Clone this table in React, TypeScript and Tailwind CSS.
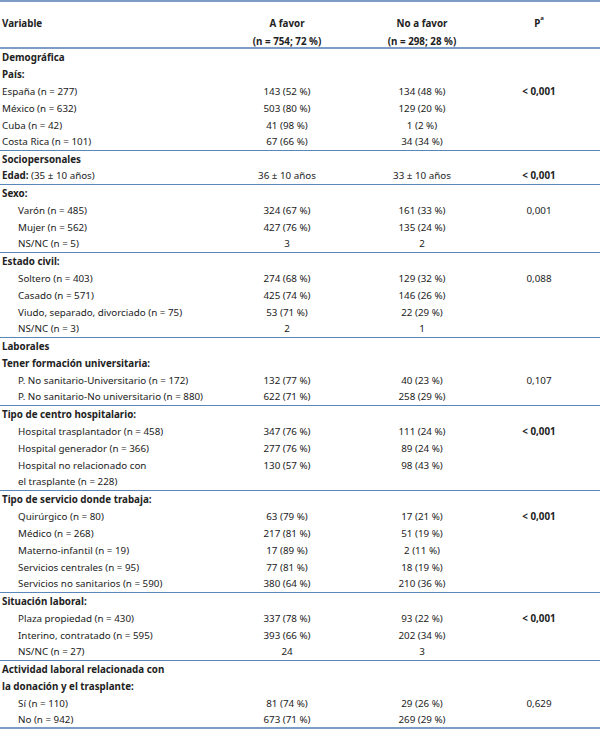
type Row = {
  label: string;
  head?: string;
  bold?: boolean;
  indent?: boolean;
  a?: string;
  b?: string;
  p?: string;
  pBold?: boolean;
  line?: "thin" | "thick";
};

const rows: Row[] = [
  { label: "Demográfica", bold: true },
  { label: "País:", bold: true },
  { label: "España (n = 277)", a: "143 (52 %)", b: "134 (48 %)", p: "< 0,001", pBold: true },
  { label: "México (n = 632)", a: "503 (80 %)", b: "129 (20 %)" },
  { label: "Cuba (n = 42)", a: "41 (98 %)", b: "1 (2 %)" },
  { label: "Costa Rica (n = 101)", a: "67 (66 %)", b: "34 (34 %)", line: "thin" },
  { label: "Sociopersonales", bold: true },
  { head: "Edad:", label: " (35 ± 10 años)", a: "36 ± 10 años", b: "33 ± 10 años", p: "< 0,001", pBold: true, line: "thin" },
  { label: "Sexo:", bold: true },
  { label: "Varón (n = 485)", indent: true, a: "324 (67 %)", b: "161 (33 %)", p: "0,001" },
  { label: "Mujer (n = 562)", indent: true, a: "427 (76 %)", b: "135 (24 %)" },
  { label: "NS/NC (n = 5)", indent: true, a: "3", b: "2", line: "thin" },
  { label: "Estado civil:", bold: true },
  { label: "Soltero (n = 403)", indent: true, a: "274 (68 %)", b: "129 (32 %)", p: "0,088" },
  { label: "Casado (n = 571)", indent: true, a: "425 (74 %)", b: "146 (26 %)" },
  { label: "Viudo, separado, divorciado (n = 75)", indent: true, a: "53 (71 %)", b: "22 (29 %)" },
  { label: "NS/NC (n = 3)", indent: true, a: "2", b: "1", line: "thin" },
  { label: "Laborales", bold: true },
  { label: "Tener formación universitaria:", bold: true },
  { label: "P. No sanitario-Universitario (n = 172)", indent: true, a: "132 (77 %)", b: "40 (23 %)", p: "0,107" },
  { label: "P. No sanitario-No universitario (n = 880)", indent: true, a: "622 (71 %)", b: "258 (29 %)", line: "thin" },
  { label: "Tipo de centro hospitalario:", bold: true },
  { label: "Hospital trasplantador (n = 458)", indent: true, a: "347 (76 %)", b: "111 (24 %)", p: "< 0,001", pBold: true },
  { label: "Hospital generador (n = 366)", indent: true, a: "277 (76 %)", b: "89 (24 %)" },
  { label: "Hospital no relacionado con", indent: true, a: "130 (57 %)", b: "98 (43 %)" },
  { label: "el trasplante (n = 228)", indent: true, line: "thin" },
  { label: "Tipo de servicio donde trabaja:", bold: true },
  { label: "Quirúrgico (n = 80)", indent: true, a: "63 (79 %)", b: "17 (21 %)", p: "< 0,001", pBold: true },
  { label: "Médico (n = 268)", indent: true, a: "217 (81 %)", b: "51 (19 %)" },
  { label: "Materno-infantil (n = 19)", indent: true, a: "17 (89 %)", b: "2 (11 %)" },
  { label: "Servicios centrales (n = 95)", indent: true, a: "77 (81 %)", b: "18 (19 %)" },
  { label: "Servicios no sanitarios (n = 590)", indent: true, a: "380 (64 %)", b: "210 (36 %)", line: "thin" },
  { label: "Situación laboral:", bold: true },
  { label: "Plaza propiedad (n = 430)", indent: true, a: "337 (78 %)", b: "93 (22 %)", p: "< 0,001", pBold: true },
  { label: "Interino, contratado (n = 595)", indent: true, a: "393 (66 %)", b: "202 (34 %)" },
  { label: "NS/NC (n = 27)", indent: true, a: "24", b: "3", line: "thin" },
  { label: "Actividad laboral relacionada con", bold: true },
  { label: "la donación y el trasplante:", bold: true },
  { label: "Sí (n = 110)", indent: true, a: "81 (74 %)", b: "29 (26 %)", p: "0,629" },
  { label: "No (n = 942)", indent: true, a: "673 (71 %)", b: "269 (29 %)", line: "thick" },
];

const cols = "grid grid-cols-[208px_158px_112px_122px]";

export default function App() {
  return (
    <div className="w-[600px] h-[729px] bg-white text-[#222] text-[9.8px] font-['Noto_Sans','Liberation_Sans',sans-serif]">
      <div className={`${cols} h-[49px] border-t-2 border-b-2 border-[#7d9dc6] pt-[13px] leading-[18px] font-bold`}>
        <div className="pl-[2px]">Variable</div>
        <div className="flex flex-col items-center">
          <span>A favor</span>
          <span>(n = 754; 72 %)</span>
        </div>
        <div className="flex flex-col items-center">
          <span>No a favor</span>
          <span>(n = 298; 28 %)</span>
        </div>
        <div className="flex justify-center">
          <span>
            P<sup className="text-[6px] align-[4px]">a</sup>
          </span>
        </div>
      </div>
      {rows.map((r, i) => (
        <div
          key={i}
          className={`${cols} h-[17px] items-center leading-none ${
            r.line === "thin" ? "border-b border-[#5b86b9]" : ""
          } ${r.line === "thick" ? "border-b-2 border-[#7d9dc6]" : ""}`}
        >
          <div className={`${r.indent ? "pl-[18px]" : "pl-[2px]"} whitespace-nowrap ${r.bold ? "font-bold" : ""}`}>
            {r.head && <span className="font-bold">{r.head}</span>}
            {r.label}
          </div>
          <div className="text-center">{r.a}</div>
          <div className="text-center">{r.b}</div>
          <div className={`text-center ${r.pBold ? "font-bold" : ""}`}>{r.p}</div>
        </div>
      ))}
    </div>
  );
}
